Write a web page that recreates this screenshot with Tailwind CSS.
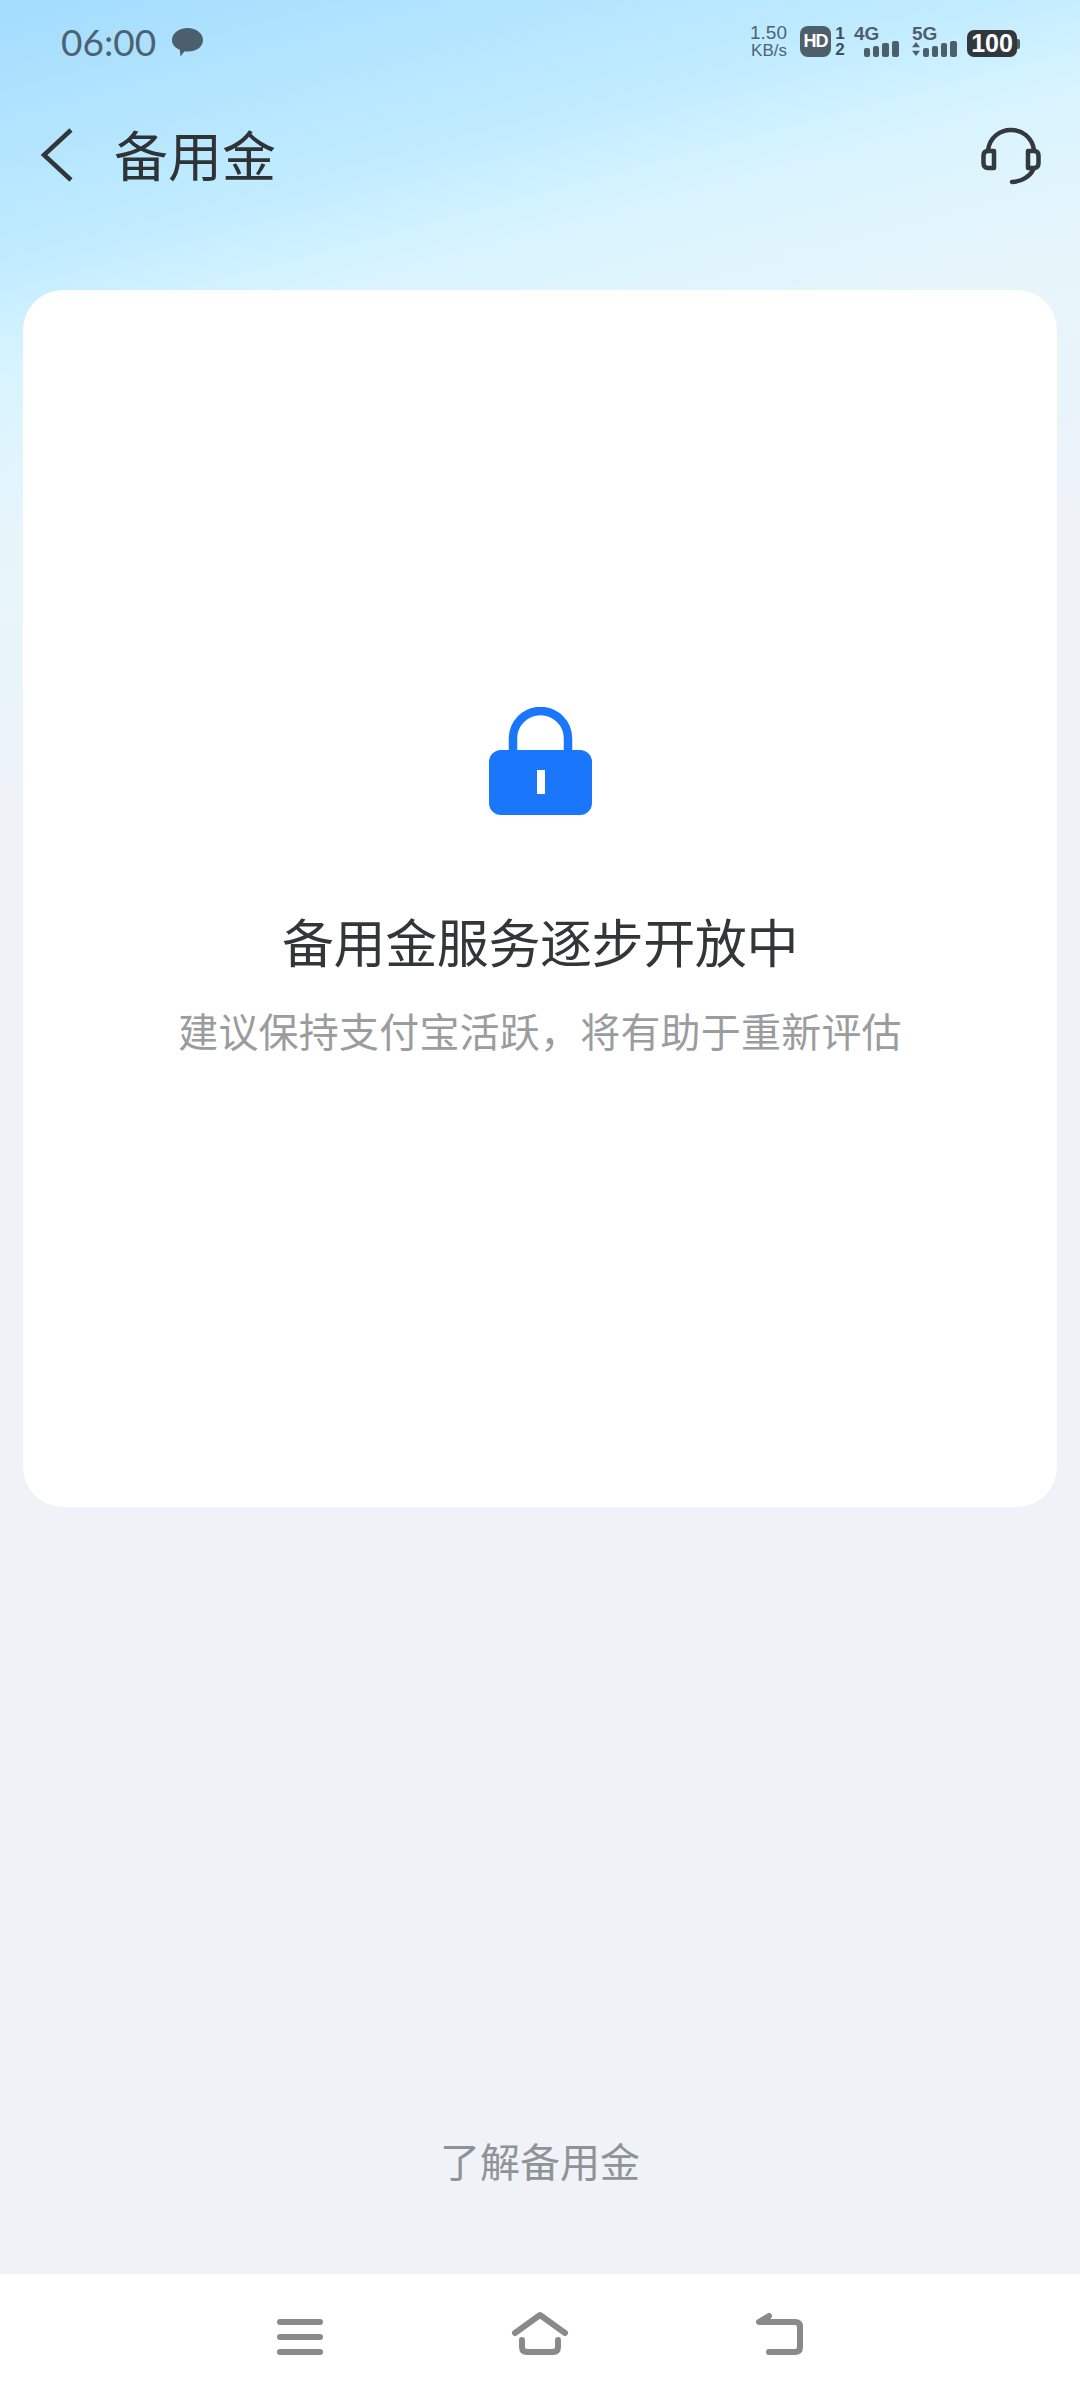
<!doctype html>
<html lang="zh">
<head>
<meta charset="utf-8">
<script src="https://cdn.jsdelivr.net/npm/@tailwindcss/browser@4"></script>
<title>备用金</title>
</head>
<body class="m-0">
<div class="w-[1080px] h-[2400px] flex flex-col overflow-hidden font-['Noto_Sans_CJK_SC',sans-serif] bg-[linear-gradient(165deg,#a2dcfd_0%,#c2ecff_10%,#d8f4fe_14%,#e7f5fb_20%,#e9f4fa_26%,#eff3f8_30%)]">
  <!-- status bar -->
  <div class="h-[84px] shrink-0 flex items-start justify-between pl-[61px] pr-[60px] pt-[23px] text-[#4c6272]">
    <div class="flex items-center gap-[16px] h-[38px]">
      <span class="font-['Lato',sans-serif] text-[37px] leading-[38px]">06:00</span>
      <svg width="31" height="29" viewBox="0 0 31 29"><path d="M15.500 0C24 0 31 5 31 12C31 19 24 23.500 16 23.500C14.500 23.500 13.500 23.500 12.500 23.200L8.500 28.500L7.800 21.800C3 19.800 0 16.500 0 12C0 5 7 0 15.500 0Z" fill="#4b5f6e"/></svg>
    </div>
    <div class="flex items-start h-[38px] font-['Liberation_Sans',sans-serif]">
      <div class="flex flex-col items-end w-[37px] text-[#4f6373]">
        <span class="text-[19px] leading-[20px]">1.50</span>
        <span class="text-[17px] leading-[15px]">KB/s</span>
      </div>
      <div class="ml-[13px] w-[31px] h-[31px] mt-[3px] rounded-[8px] bg-[#4e5f6c] text-white text-[18px] leading-[31px] font-bold text-center tracking-[-1px]">HD</div>
      <div class="ml-[3px] w-[12px] mt-[3px] flex flex-col text-[#3f505c] text-[17px] leading-[16px] font-bold text-center"><span>1</span><span>2</span></div>
      <div class="ml-[9px] w-[45px] mt-[3px] flex flex-col">
        <span class="text-[19px] leading-[15px] font-bold text-[#4e5f6c] -ml-[1px]">4G</span>
        <div class="ml-[9px] flex items-end gap-[3px] h-[16px]">
          <i class="block w-[6px] h-[9px] rounded-[2px] bg-[#4e5f6c]"></i><i class="block w-[6px] h-[11px] rounded-[2px] bg-[#4e5f6c]"></i><i class="block w-[7px] h-[14px] rounded-[2px] bg-[#4e5f6c]"></i><i class="block w-[7px] h-[16px] rounded-[2px] bg-[#4e5f6c]"></i>
        </div>
      </div>
      <div class="ml-[12px] w-[45px] mt-[3px] flex flex-col">
        <span class="text-[19px] leading-[15px] font-bold text-[#4e5f6c]">5G</span>
        <div class="flex items-end h-[16px]">
          <svg width="9" height="16" viewBox="0 0 9 16" class="mr-[3px]"><path d="M4.500 0L9 6H0ZM0 10H9L4.500 16Z" fill="#4e5f6c"/></svg>
          <div class="flex items-end gap-[3px]">
            <i class="block w-[6px] h-[9px] rounded-[2px] bg-[#4e5f6c]"></i><i class="block w-[6px] h-[11px] rounded-[2px] bg-[#4e5f6c]"></i><i class="block w-[6px] h-[14px] rounded-[2px] bg-[#4e5f6c]"></i><i class="block w-[7px] h-[16px] rounded-[2px] bg-[#4e5f6c]"></i>
          </div>
        </div>
      </div>
      <div class="ml-[10px] mt-[7px] flex items-center">
        <div class="w-[50px] h-[27px] rounded-[7px] bg-[#30383e] text-white text-[25px] leading-[27px] font-bold text-center">100</div>
        <i class="block w-[3px] h-[10px] rounded-r-[2px] bg-[#4e5f6c]"></i>
      </div>
    </div>
  </div>
  <!-- title bar -->
  <div class="h-[206px] shrink-0 flex items-start justify-between pl-[40px] pr-[38px] pt-[41px]">
    <div class="flex items-center h-[60px]">
      <svg width="34" height="56" viewBox="0 0 34 56" fill="none"><path d="M31 3L4 28L31 53" stroke="#30363a" stroke-width="4.500"/></svg>
      <span class="ml-[40px] pb-[2px] text-[54px] leading-[58px] text-[#303336]">备用金</span>
    </div>
    <svg width="62" height="60" viewBox="0 0 62 60" fill="none" stroke="#33393d" class="mt-[1px]" stroke-width="4.500">
      <path d="M8 24C10 11 20 4 31 4C42 4 52 11 54 24"/>
      <path d="M14 25H8C5 25 3.500 27 3.500 30V37C3.500 40 5 42 8 42H14Z" stroke-linejoin="round"/>
      <path d="M48 25H54C57 25 58.500 27 58.500 30V37C58.500 40 57 42 54 42H48Z" stroke-linejoin="round"/>
      <path d="M53 44C50 50 42 55.500 32 56" stroke-linecap="round"/>
    </svg>
  </div>
  <!-- card -->
  <div class="mx-[23px] h-[1217px] shrink-0 rounded-[40px] bg-white flex flex-col items-center pt-[417px]">
    <svg width="103" height="108" viewBox="0 0 103 108" class="ml-[1px]">
      <path d="M24 46V31.500A27.500 27.500 0 0 1 79 31.500V46" fill="none" stroke="#1a76fb" stroke-width="8.500"/>
      <rect x="0" y="43" width="103" height="65" rx="12" fill="#1a76fb"/>
      <rect x="48" y="63" width="8" height="24" fill="#fff"/>
    </svg>
    <div class="mt-[90px] text-[52px] leading-[72px] text-[#333538] tracking-[-0.4px]">备用金服务逐步开放中</div>
    <div class="mt-[25px] text-[40px] leading-[56px] text-[#9b9c9e] tracking-[0.2px]">建议保持支付宝活跃，将有助于重新评估</div>
  </div>
  <!-- footer link -->
  <div class="flex-1 flex items-end justify-center pb-[86px]">
    <span class="text-[40px] leading-[56px] text-[#8f9296]">了解备用金</span>
  </div>
  <!-- navigation bar -->
  <div class="h-[126px] shrink-0 bg-white flex items-start pl-[275px] pt-[36px]">
    <svg width="50" height="50" viewBox="0 0 50 50" fill="none" stroke="#8a8a8a" stroke-width="6" stroke-linecap="round">
      <path d="M5 12H45M5 27H45M5 42H45"/>
    </svg>
    <svg width="58" height="50" viewBox="0 0 58 50" fill="none" stroke="#8a8a8a" stroke-width="6" stroke-linecap="round" stroke-linejoin="round" class="ml-[186px]">
      <path d="M4 23L29 5L54 23"/>
      <path d="M11 30V37Q11 42 16 42H42Q47 42 47 37V30"/>
    </svg>
    <svg width="52" height="50" viewBox="0 0 52 50" fill="none" stroke="#8a8a8a" stroke-width="6" stroke-linecap="round" stroke-linejoin="round" class="ml-[185px]">
      <path d="M15 6L5 12H41Q46 12 46 17V37Q46 42 41 42H15"/>
    </svg>
  </div>
</div>
</body>
</html>
